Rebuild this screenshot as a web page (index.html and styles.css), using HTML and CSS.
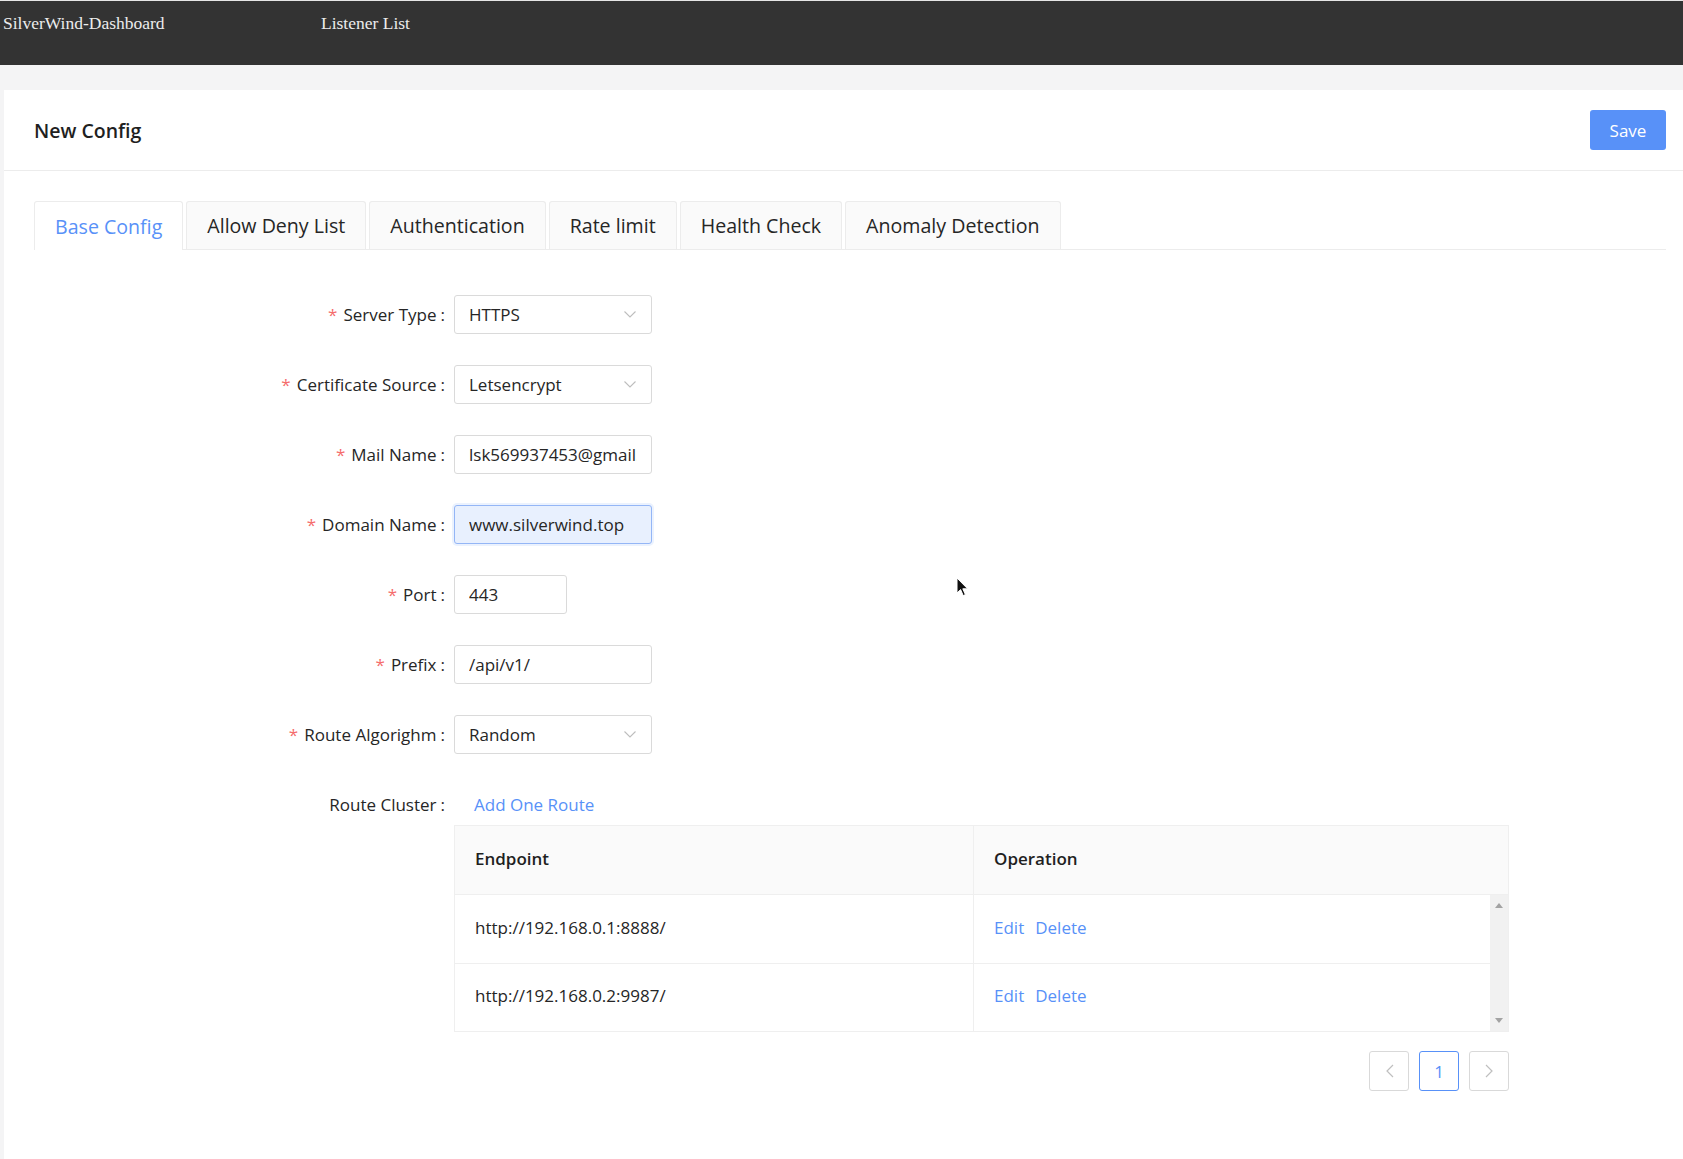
FILE: index.html
```html
<!DOCTYPE html>
<html lang="en">
<head>
<meta charset="utf-8">
<title>SilverWind-Dashboard</title>
<link rel="stylesheet" href="styles.css">
</head>
<body>
<header class="topbar">
  <span class="brand">SilverWind-Dashboard</span>
  <span class="nav-item">Listener List</span>
</header>
<main class="main">
  <section class="card">
    <div class="card-head">
      <h1 class="card-title">New Config</h1>
      <button class="btn-primary" type="button">Save</button>
    </div>
    <div class="card-body">
      <div class="tabs">
        <div class="tab active">Base Config</div>
        <div class="tab">Allow Deny List</div>
        <div class="tab">Authentication</div>
        <div class="tab">Rate limit</div>
        <div class="tab">Health Check</div>
        <div class="tab">Anomaly Detection</div>
      </div>
      <form class="form">
        <div class="form-row">
          <label class="form-label"><span class="req">*</span>Server Type<span class="colon">:</span></label>
          <div class="form-control">
            <div class="select"><span>HTTPS</span><svg class="chev" width="12" height="7" viewBox="0 0 12 7"><path d="M0.5 0.5 L6 6 L11.5 0.5" fill="none" stroke="#bdbdbd" stroke-width="1.1"/></svg></div>
          </div>
        </div>
        <div class="form-row">
          <label class="form-label"><span class="req">*</span>Certificate Source<span class="colon">:</span></label>
          <div class="form-control">
            <div class="select"><span>Letsencrypt</span><svg class="chev" width="12" height="7" viewBox="0 0 12 7"><path d="M0.5 0.5 L6 6 L11.5 0.5" fill="none" stroke="#bdbdbd" stroke-width="1.1"/></svg></div>
          </div>
        </div>
        <div class="form-row">
          <label class="form-label"><span class="req">*</span>Mail Name<span class="colon">:</span></label>
          <div class="form-control">
            <input class="input" type="text" value="lsk569937453@gmail.com">
          </div>
        </div>
        <div class="form-row">
          <label class="form-label"><span class="req">*</span>Domain Name<span class="colon">:</span></label>
          <div class="form-control">
            <input class="input focused" type="text" value="www.silverwind.top">
          </div>
        </div>
        <div class="form-row">
          <label class="form-label"><span class="req">*</span>Port<span class="colon">:</span></label>
          <div class="form-control">
            <input class="input short" type="text" value="443">
          </div>
        </div>
        <div class="form-row">
          <label class="form-label"><span class="req">*</span>Prefix<span class="colon">:</span></label>
          <div class="form-control">
            <input class="input" type="text" value="/api/v1/">
          </div>
        </div>
        <div class="form-row">
          <label class="form-label"><span class="req">*</span>Route Algorighm<span class="colon">:</span></label>
          <div class="form-control">
            <div class="select"><span>Random</span><svg class="chev" width="12" height="7" viewBox="0 0 12 7"><path d="M0.5 0.5 L6 6 L11.5 0.5" fill="none" stroke="#bdbdbd" stroke-width="1.1"/></svg></div>
          </div>
        </div>
        <div class="form-row last">
          <label class="form-label">Route Cluster<span class="colon">:</span></label>
          <div class="form-control">
            <div class="link-line"><a class="link">Add One Route</a></div>
            <div class="table">
              <div class="thead">
                <div class="th">Endpoint</div>
                <div class="th">Operation</div>
              </div>
              <div class="tbody">
                <div class="rows">
                  <div class="tr">
                    <div class="td">http://192.168.0.1:8888/</div>
                    <div class="td"><a class="link">Edit</a><a class="link del">Delete</a></div>
                  </div>
                  <div class="tr">
                    <div class="td">http://192.168.0.2:9987/</div>
                    <div class="td"><a class="link">Edit</a><a class="link del">Delete</a></div>
                  </div>
                </div>
                <div class="scrollbar">
                  <svg width="8" height="5" viewBox="0 0 8 5"><path d="M0 5 L4 0 L8 5 Z" fill="#a3a3a3"/></svg>
                  <svg width="8" height="5" viewBox="0 0 8 5"><path d="M0 0 L8 0 L4 5 Z" fill="#a3a3a3"/></svg>
                </div>
              </div>
            </div>
            <div class="pagination">
              <div class="page"><svg width="9" height="14" viewBox="0 0 9 14"><path d="M8 1 L2 7 L8 13" fill="none" stroke="#bfbfbf" stroke-width="1.2"/></svg></div>
              <div class="page active">1</div>
              <div class="page"><svg width="9" height="14" viewBox="0 0 9 14"><path d="M1 1 L7 7 L1 13" fill="none" stroke="#bfbfbf" stroke-width="1.2"/></svg></div>
            </div>
          </div>
        </div>
      </form>
    </div>
  </section>
</main>
<svg class="cursor" width="13" height="21" viewBox="0 0 13 21"><path d="M1 1 L1 16 L4.6 12.6 L7.2 18.6 L9.4 17.6 L6.8 11.8 L11.6 11.8 Z" fill="#111" stroke="#fff" stroke-width="1"/></svg>
</body>
</html>
```
FILE: styles.css
```css
* { box-sizing: border-box; }

body {
  margin: 0;
  background: #f4f4f5;
  font-family: "Open Sans", "Noto Sans", sans-serif;
  font-size: 17px;
  color: #262626;
}

.topbar {
  height: 65px;
  border-top: 1px solid #e6e6e6;
  background: #333333;
  display: flex;
  align-items: flex-start;
  padding: 11.5px 0 0 3px;
  font-family: "Liberation Serif", serif;
  font-size: 17.5px;
  line-height: 20px;
  color: #ececec;
}

.brand { width: 318px; }

.main { padding: 25px 0 0 4px; }

.card {
  background: #ffffff;
  min-height: calc(100vh - 90px);
}

.card-head {
  height: 81px;
  border-bottom: 1px solid #ececec;
  display: flex;
  align-items: center;
  justify-content: space-between;
  padding: 0 17px 0 30px;
}

.card-title {
  margin: 0;
  font-size: 19.5px;
  font-weight: 600;
  color: #1f1f1f;
}

.btn-primary {
  width: 76px;
  height: 40px;
  background: #5891f8;
  color: #ffffff;
  border: 0;
  border-radius: 3px;
  font-family: inherit;
  font-size: 17px;
  padding: 0;
}

.card-body { padding: 30px 17px 40px 30px; }

.tabs {
  display: flex;
  gap: 3px;
  border-bottom: 1px solid #ececec;
}

.tab {
  height: 48px;
  padding: 0 20px;
  display: flex;
  align-items: center;
  background: #fafafa;
  border: 1px solid #ececec;
  border-bottom: 0;
  border-radius: 3px 3px 0 0;
  font-size: 19.6px;
  color: #262626;
}

.tab.active {
  background: #ffffff;
  color: #5891f8;
  height: 49px;
  margin-bottom: -1px;
}

.form { padding-top: 45px; }

.form-row {
  display: grid;
  grid-template-columns: 411px 1055px;
  column-gap: 9px;
  align-items: start;
  margin-bottom: 31px;
}

.form-row.last { margin-bottom: 0; }

.form-label {
  height: 39px;
  display: flex;
  align-items: center;
  justify-content: flex-end;
  white-space: nowrap;
  padding-bottom: 1px;
}

.req {
  color: #f56c6c;
  margin-right: 6px;
}

.colon { margin-left: 4px; }

.select, .input {
  width: 198px;
  height: 39px;
  border: 1px solid #dadada;
  border-radius: 3px;
  background: #ffffff;
  padding: 0 14px;
  font-family: inherit;
  font-size: 17px;
  color: #262626;
}

.select {
  display: flex;
  align-items: center;
  justify-content: space-between;
  padding-right: 15px;
}

.input { outline: none; display: block; }

.input.focused {
  background: #e8f0fe;
  border-color: #94b6f6;
  box-shadow: 0 0 0 2px rgba(88, 145, 248, 0.12);
}

.input.short { width: 113px; }

.link-line {
  height: 40px;
  display: flex;
  align-items: center;
  padding-left: 20px;
  padding-bottom: 2px;
}

.link { color: #5891f8; }

.link.del { margin-left: 11px; }

.table {
  border: 1px solid #efefef;
}

.thead {
  display: grid;
  grid-template-columns: 518px 1fr;
  background: #fafafa;
  border-bottom: 1px solid #efefef;
}

.th {
  height: 68px;
  padding: 0 20px 3px;
  display: flex;
  align-items: center;
  font-weight: 600;
  color: #1f1f1f;
}

.th + .th { border-left: 1px solid #efefef; }

.tbody { display: flex; }

.rows { flex: 1; }

.tr {
  display: grid;
  grid-template-columns: 518px 1fr;
}

.tr + .tr { border-top: 1px solid #efefef; }

.td {
  height: 67.5px;
  padding: 0 20px 3px;
  display: flex;
  align-items: center;
}

.td + .td { border-left: 1px solid #efefef; }

.scrollbar {
  width: 18px;
  background: #f1f1f1;
  display: flex;
  flex-direction: column;
  justify-content: space-between;
  align-items: center;
  padding: 8px 0 8px;
}

.pagination {
  display: flex;
  justify-content: flex-end;
  gap: 10px;
  margin-top: 19px;
}

.page {
  width: 40px;
  height: 40px;
  border: 1px solid #d9d9d9;
  border-radius: 3px;
  display: flex;
  align-items: center;
  justify-content: center;
  font-size: 17px;
}

.page.active {
  border-color: #5891f8;
  color: #5891f8;
}

.cursor {
  position: absolute;
  left: 956px;
  top: 577px;
}
```
